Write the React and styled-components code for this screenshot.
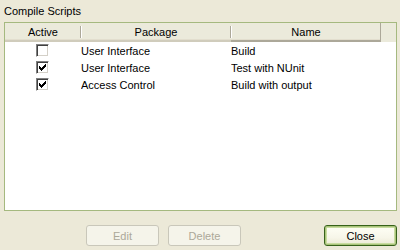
import React from "react";
import styled, { createGlobalStyle } from "styled-components";

const GlobalStyle = createGlobalStyle`
  html, body {
    margin: 0;
    padding: 0;
    background: #ece9d8;
  }
  body {
    font-family: "Liberation Sans", Arial, sans-serif;
    font-size: 11px;
    color: #000;
  }
`;

const Dialog = styled.div`
  width: 400px;
  height: 250px;
  box-sizing: border-box;
  padding: 3px 3px 0 4px;
  display: flex;
  flex-direction: column;
  background: #ece9d8;
`;

const Caption = styled.div`
  height: 19px;
  line-height: 16px;
`;

const ListView = styled.div`
  height: 189px;
  box-sizing: border-box;
  border: 1px solid #a5b97f;
  background: #fff;
  overflow: hidden;
`;

const HeaderRow = styled.div`
  display: flex;
  height: 19px;
  background: #ebeadb;
`;

const HeaderCell = styled.div`
  flex: none;
  width: ${(p) => p.$w}px;
  box-sizing: border-box;
  height: 19px;
  line-height: 18px;
  text-align: center;
  border-bottom: 2px solid #d0ccbc;
  box-shadow: inset 0 -1px 0 #e2dece;
  position: relative;
  &::after {
    content: "";
    position: absolute;
    right: 0;
    top: 3px;
    bottom: 2px;
    width: 1px;
    background: #aca899;
    box-shadow: 1px 0 0 #fff;
  }
`;

const LastCell = styled(HeaderCell)`
  border-bottom-color: #aca899;
  &::after {
    top: 0;
    bottom: -2px;
    background: #aca899;
    box-shadow: none;
  }
`;

const Row = styled.div`
  display: flex;
  height: 17px;
  align-items: center;
  &:first-of-type {
    margin-top: 2px;
  }
`;

const Cell = styled.div`
  flex: none;
  width: ${(p) => p.$w}px;
  box-sizing: border-box;
  display: flex;
  justify-content: ${(p) => (p.$center ? "center" : "flex-start")};
  align-items: center;
  white-space: nowrap;
  overflow: hidden;
`;

const Box = styled.div`
  width: 13px;
  height: 13px;
  box-sizing: border-box;
  background: #fff;
  border-top: 1px solid #808080;
  border-left: 1px solid #808080;
  border-right: 1px solid #fff;
  border-bottom: 1px solid #fff;
  box-shadow: inset 1px 1px 0 #404040, inset -1px -1px 0 #d4d0c8;
  position: relative;
  margin-left: -1px;
  svg {
    position: absolute;
    left: 2px;
    top: 2px;
  }
`;

const ButtonBar = styled.div`
  display: flex;
  margin-top: 14px;
  padding-left: 82px;
  gap: 9px;
`;

const Button = styled.button`
  flex: none;
  width: 73px;
  height: 21px;
  padding: 0;
  font-family: "Liberation Sans", Arial, sans-serif;
  font-size: 11px;
  border-radius: 3px;
  border: 1px solid ${(p) => (p.disabled ? "#c9c7ba" : "#37621a")};
  background: ${(p) =>
    p.disabled
      ? "#f5f4ea"
      : "linear-gradient(#fffff6, #f7f6e9 60%, #ece9d5)"};
  color: ${(p) => (p.disabled ? "#aca899" : "#000")};
  box-shadow: ${(p) =>
    p.$default ? "inset 0 0 0 1px #a9c37a, inset 0 0 0 2px #c8dca0" : "none"};
  margin-left: ${(p) => (p.$push ? "auto" : "0")};
`;

const Check = () => (
  <svg width="7" height="7" viewBox="0 0 7 7" shapeRendering="crispEdges">
    <path
      d="M0 2h1v3h-1z M1 3h1v3h-1z M2 4h1v3h-1z M3 3h1v3h-1z M4 2h1v3h-1z M5 1h1v3h-1z M6 0h1v3h-1z"
      fill="#000"
    />
  </svg>
);

const columns = [76, 150, 150];

const rows = [
  { active: false, pkg: "User Interface", name: "Build" },
  { active: true, pkg: "User Interface", name: "Test with NUnit" },
  { active: true, pkg: "Access Control", name: "Build with output" },
];

export default function App() {
  return (
    <>
      <GlobalStyle />
      <Dialog>
        <Caption>Compile Scripts</Caption>
        <ListView>
          <HeaderRow>
            <HeaderCell $w={columns[0]}>Active</HeaderCell>
            <HeaderCell $w={columns[1]}>Package</HeaderCell>
            <LastCell $w={columns[2]}>Name</LastCell>
          </HeaderRow>
          {rows.map((r, i) => (
            <Row key={i}>
              <Cell $w={columns[0]} $center>
                <Box>{r.active && <Check />}</Box>
              </Cell>
              <Cell $w={columns[1]}>{r.pkg}</Cell>
              <Cell $w={columns[2]}>{r.name}</Cell>
            </Row>
          ))}
        </ListView>
        <ButtonBar>
          <Button disabled>Edit</Button>
          <Button disabled>Delete</Button>
          <Button $default $push>
            Close
          </Button>
        </ButtonBar>
      </Dialog>
    </>
  );
}
